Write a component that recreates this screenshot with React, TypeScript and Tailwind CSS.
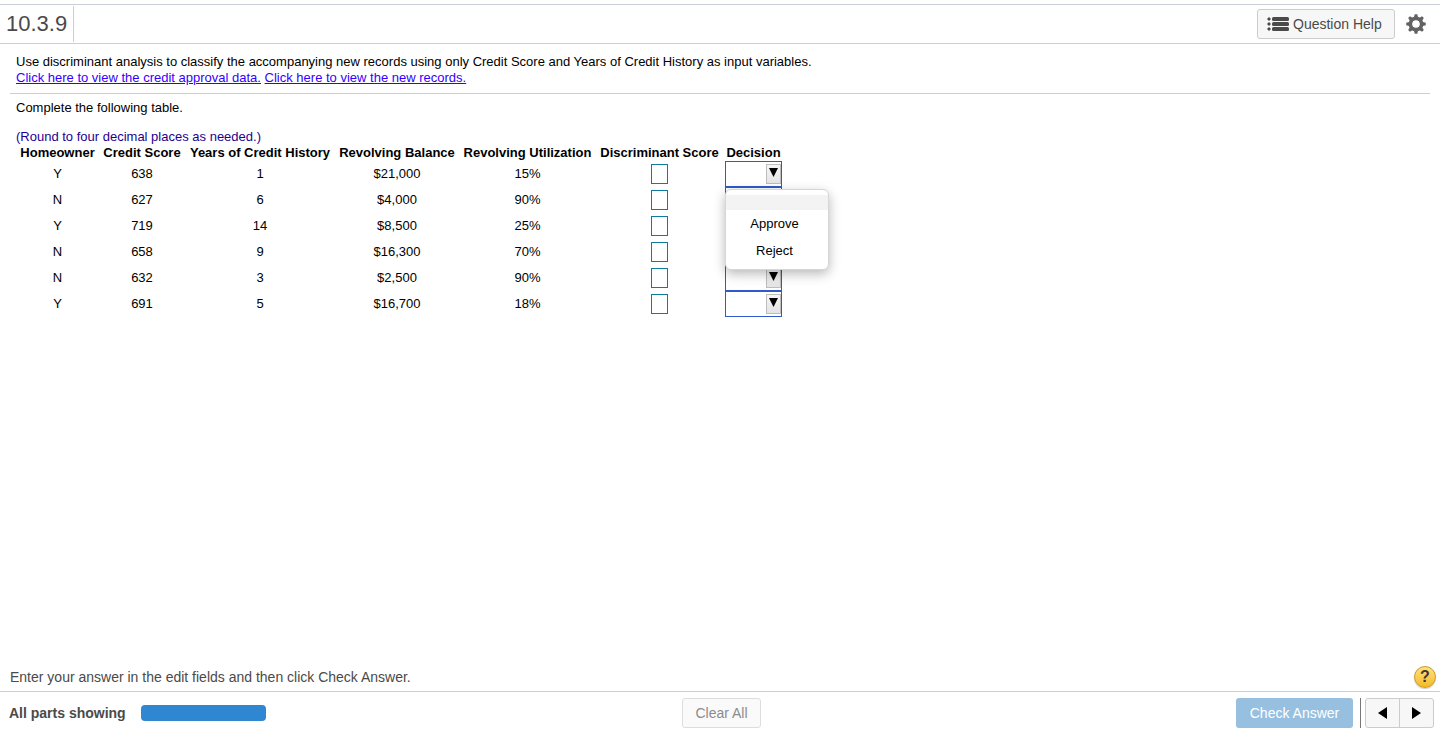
import { useState } from 'react';

type NewRecord = {
  homeowner: string;
  score: string;
  years: string;
  balance: string;
  utilization: string;
};

const records: NewRecord[] = [
  { homeowner: 'Y', score: '638', years: '1', balance: '$21,000', utilization: '15%' },
  { homeowner: 'N', score: '627', years: '6', balance: '$4,000', utilization: '90%' },
  { homeowner: 'Y', score: '719', years: '14', balance: '$8,500', utilization: '25%' },
  { homeowner: 'N', score: '658', years: '9', balance: '$16,300', utilization: '70%' },
  { homeowner: 'N', score: '632', years: '3', balance: '$2,500', utilization: '90%' },
  { homeowner: 'Y', score: '691', years: '5', balance: '$16,700', utilization: '18%' },
];

const columns = [
  { label: 'Homeowner', width: 'w-[83px]' },
  { label: 'Credit Score', width: 'w-[86px]' },
  { label: 'Years of Credit History', width: 'w-[150px]' },
  { label: 'Revolving Balance', width: 'w-[124px]' },
  { label: 'Revolving Utilization', width: 'w-[137px]' },
  { label: 'Discriminant Score', width: 'w-[127px]' },
  { label: 'Decision', width: 'w-[61px]' },
];

function ListIcon() {
  return (
    <svg width="22" height="14" viewBox="0 0 22 14" fill="#4a4a4a" aria-hidden="true">
      {[2, 7, 12].map((y) => (
        <g key={y}>
          <path d={`M2 ${y - 2}l2 2-2 2-2-2z`} />
          <rect x="5" y={y - 2} width="17" height="4" rx="1.5" />
        </g>
      ))}
    </svg>
  );
}

function GearIcon() {
  return (
    <svg width="20" height="20" viewBox="-10 -10 20 20" aria-hidden="true">
      <g fill="#636363">
        {[0, 45, 90, 135, 180, 225, 270, 315].map((angle) => (
          <path key={angle} d="M-2.2-6l.9-3.8h2.6l.9 3.8z" transform={`rotate(${angle})`} />
        ))}
      </g>
      <circle r="5.6" fill="none" stroke="#636363" strokeWidth="3.6" />
    </svg>
  );
}

function DecisionSelect({
  row,
  value,
  onChange,
}: {
  row: number;
  value: string;
  onChange: (value: string) => void;
}) {
  return (
    <div className="relative mx-auto h-[26px] w-[57px]">
      <select
        aria-label={`Decision for record ${row + 1}`}
        className="block h-full w-full appearance-none border border-[#2f59cc] bg-white pl-1 pr-4 text-[13px]"
        value={value}
        onChange={(e) => onChange(e.target.value)}
      >
        <option value=""></option>
        <option value="Approve">Approve</option>
        <option value="Reject">Reject</option>
      </select>
      <span className="pointer-events-none absolute right-px top-[3px] flex h-5 w-[15px] justify-center border border-[#bdbdbd] bg-linear-to-b from-[#f6f6f6] to-[#e4e4e4] pt-[3px]">
        <svg width="9" height="9" viewBox="0 0 9 9" aria-hidden="true">
          <path d="M0 0h9L4.5 9z" />
        </svg>
      </span>
    </div>
  );
}

function DecisionMenu({ onPick }: { onPick: (value: string) => void }) {
  return (
    <div
      role="listbox"
      aria-label="Decision"
      className="absolute left-[2px] top-7 z-10 flex h-[81px] w-[104px] flex-col rounded-md border border-[#d6d6d6] bg-white pt-[5px] shadow-[0_4px_12px_rgba(0,0,0,0.28)]"
    >
      <button
        role="option"
        aria-selected="true"
        aria-label="Blank"
        className="h-[15px] bg-[#f3f3f3]"
        onClick={() => onPick('')}
      />
      <button role="option" aria-selected="false" className="h-[27px] pr-[5px]" onClick={() => onPick('Approve')}>
        Approve
      </button>
      <button role="option" aria-selected="false" className="h-[27px] pr-[5px]" onClick={() => onPick('Reject')}>
        Reject
      </button>
    </div>
  );
}

export default function App() {
  const [decisions, setDecisions] = useState<string[]>(records.map(() => ''));
  const [scores, setScores] = useState<string[]>(records.map(() => ''));
  const [menuOpen, setMenuOpen] = useState(true);

  const setDecision = (row: number, value: string) => {
    setDecisions(decisions.map((d, i) => (i === row ? value : d)));
    setMenuOpen(false);
  };

  return (
    <div className="flex min-h-screen flex-col bg-white pt-1 font-['Liberation_Sans',Arial,sans-serif] text-[13px] leading-4 text-black">
      <header className="flex h-10 items-center justify-between border-y border-[#c9cdda] pr-[14px]">
        <h1 className="flex h-9 items-center border-r border-[#c9cdda] px-[6px] text-[22px] text-[#4a4a4a]">10.3.9</h1>
        <div className="flex items-center gap-[11px]">
          <button className="flex h-[30px] w-[138px] items-center gap-1 rounded-[3px] border border-[#cccccc] bg-[#f7f7f7] pl-[9px] text-sm text-[#4a4a4a]">
            <ListIcon />
            Question Help
          </button>
          <button aria-label="Settings">
            <GearIcon />
          </button>
        </div>
      </header>

      <main className="flex-1 px-[10px]">
        <section className="border-b border-[#c9cdda] px-[6px] pb-[7px] pt-[10px]">
          <p>
            Use discriminant analysis to classify the accompanying new records using only Credit Score and Years of
            Credit History as input variables.
          </p>
          <p className="text-[#3300ff]">
            <a href="#credit-data" className="underline">
              Click here to view the credit approval data.
            </a>{' '}
            <a href="#new-records" className="underline">
              Click here to view the new records.
            </a>
          </p>
        </section>

        <section className="px-[6px] pt-[6px]">
          <p>Complete the following table.</p>
          <p className="mt-[13px] text-[#1e0091]">(Round to four decimal places as needed.)</p>
          <table className="w-[768px] table-fixed border-collapse text-center">
            <thead>
              <tr>
                {columns.map((c) => (
                  <th key={c.label} scope="col" className={`${c.width} whitespace-nowrap p-0 font-bold`}>
                    {c.label}
                  </th>
                ))}
              </tr>
            </thead>
            <tbody>
              {records.map((r, i) => (
                <tr key={i} className="h-[26px]">
                  <td className="p-0">{r.homeowner}</td>
                  <td className="p-0">{r.score}</td>
                  <td className="p-0">{r.years}</td>
                  <td className="p-0">{r.balance}</td>
                  <td className="p-0">{r.utilization}</td>
                  <td className="p-0">
                    <input
                      type="text"
                      aria-label={`Discriminant score for record ${i + 1}`}
                      className="mx-auto block h-5 w-[17px] border border-[#0f7ba3] bg-white"
                      value={scores[i]}
                      onChange={(e) => setScores(scores.map((s, j) => (j === i ? e.target.value : s)))}
                    />
                  </td>
                  <td className="relative p-0">
                    <DecisionSelect row={i} value={decisions[i]} onChange={(value) => setDecision(i, value)} />
                    {i === 0 && menuOpen && <DecisionMenu onPick={(value) => setDecision(0, value)} />}
                  </td>
                </tr>
              ))}
            </tbody>
          </table>
        </section>
      </main>

      <footer className="text-sm text-[#4a4a4a]">
        <div className="flex items-center justify-between pb-[3px] pl-[10px] pr-1">
          <p>Enter your answer in the edit fields and then click Check Answer.</p>
          <button
            aria-label="Help"
            className="flex size-[22px] items-center justify-center rounded-full border border-[#c79a2c] bg-linear-to-b from-[#ffe478] to-[#f6b91c] text-base font-bold text-[#3a3a3a] shadow-[0_1px_1px_rgba(0,0,0,0.2)]"
          >
            ?
          </button>
        </div>
        <div className="grid h-[43px] grid-cols-[1fr_auto_1fr] items-center border-t border-[#c9cdda] pl-[9px] pr-[6px]">
          <div className="flex items-center gap-[15px]">
            <span className="font-bold">All parts showing</span>
            <div className="h-4 w-[125px] rounded-[4px] bg-[#3087d1]" />
          </div>
          <button
            className="h-[30px] w-[79px] rounded-[3px] border border-[#dddddd] bg-[#fafafa] text-[#8c8c8c]"
            onClick={() => {
              setScores(records.map(() => ''));
              setDecisions(records.map(() => ''));
            }}
          >
            Clear All
          </button>
          <div className="flex items-center justify-end">
            <button className="h-[30px] w-[117px] rounded-[3px] bg-[#97bfdf] text-white">Check Answer</button>
            <span className="ml-[7px] mr-1 h-[30px] w-px bg-[#777777]" />
            <div className="flex h-[30px] w-[69px] rounded-[3px] border border-[#cccccc] bg-[#f7f7f7]">
              <button aria-label="Previous" className="flex flex-1 items-center justify-center border-r border-[#cccccc]">
                <svg width="9" height="12" viewBox="0 0 9 12" fill="#000" aria-hidden="true">
                  <path d="M9 0v12L0 6z" />
                </svg>
              </button>
              <button aria-label="Next" className="flex flex-1 items-center justify-center">
                <svg width="9" height="12" viewBox="0 0 9 12" fill="#000" aria-hidden="true">
                  <path d="M0 0v12l9-6z" />
                </svg>
              </button>
            </div>
          </div>
        </div>
      </footer>
    </div>
  );
}
